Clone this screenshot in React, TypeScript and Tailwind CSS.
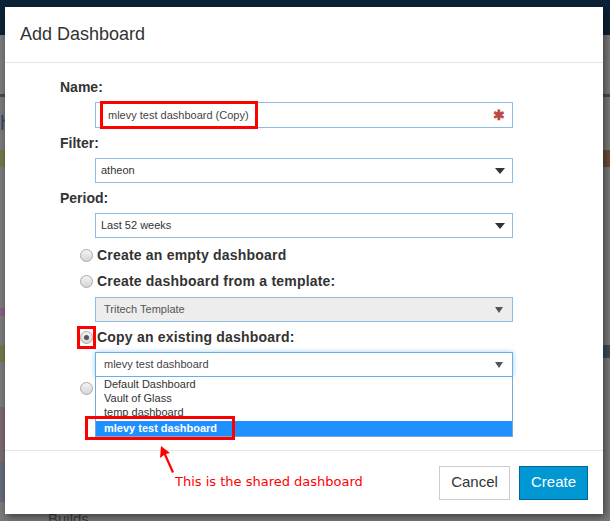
import React from 'react';

const font = { fontFamily: '"Liberation Sans", Arial, sans-serif' };

const Caret = ({ small }: { small?: boolean }) =>
  small ? (
    <svg width="8" height="6" viewBox="0 0 8 6" className="shrink-0">
      <path d="M0 0h8L4 6z" fill="#555" />
    </svg>
  ) : (
    <svg width="10" height="6" viewBox="0 0 10 6" className="shrink-0">
      <path d="M0 0h10L5 6z" fill="#333" />
    </svg>
  );

const Select = ({ value, disabled }: { value: string; disabled?: boolean }) => (
  <div
    className={`ml-[35px] flex h-[25px] w-[418px] items-center justify-between border border-[#8bbce6] text-[11px] ${
      disabled ? 'bg-[#ededed] pl-[8px] pr-[9px] text-[#555]' : 'bg-white pl-[5px] pr-[7px] text-[#333]'
    }`}
  >
    <span>{value}</span>
    <Caret small={disabled} />
  </div>
);

const Radio = ({ checked, marked }: { checked?: boolean; marked?: boolean }) => (
  <span className="relative inline-flex h-[13px] w-[13px] shrink-0 items-center justify-center rounded-full border border-[#a9a9a9] bg-gradient-to-b from-[#f4f4f4] to-[#d5d5d5]">
    {checked && <span className="h-[5px] w-[5px] rounded-full bg-[#555]" />}
    {marked && <span className="absolute left-[-4px] top-[-6px] h-[23px] w-[19px] border-[3px] border-[#ff0000]" />}
  </span>
);

const Label = ({ children, className = '' }: { children: React.ReactNode; className?: string }) => (
  <div className={`text-[14px] font-bold leading-[16px] text-[#333] ${className}`}>{children}</div>
);

const RadioRow = ({ children, checked, marked, className = '' }: any) => (
  <div className={`ml-[20px] flex items-center gap-[4px] text-[14px] font-bold leading-[16px] tracking-[0.2px] text-[#333] ${className}`}>
    <Radio checked={checked} marked={marked} />
    {children}
  </div>
);

export default function App() {
  return (
    <div className="relative h-[521px] w-[610px] overflow-hidden bg-[#7b7b7b]" style={font}>
      {/* page behind the overlay */}
      <div className="absolute left-0 top-0 h-[35px] w-full bg-[#0c2236]" />
      <div className="absolute left-0 top-[94px] h-[3px] w-full bg-[#4a4a4a]" />
      <div className="absolute left-0 top-[108px] text-[20px] text-[#2a4a6a]">h</div>
      <div className="absolute left-0 top-[150px] h-[17px] w-[6px] bg-[#6f7a4a]" />
      <div className="absolute right-0 top-[150px] h-[17px] w-[8px] bg-[#6d4c3a]" />
      <div className="absolute left-0 top-[308px] h-[8px] w-[6px] bg-[#8a5d86]" />
      <div className="absolute left-0 top-[345px] h-[17px] w-[6px] bg-[#6f7a4a]" />
      <div className="absolute right-0 top-[345px] h-[13px] w-[8px] bg-[#3c4d5c]" />
      <div className="absolute left-0 top-[407px] h-[55px] w-[6px] bg-[#7a6a6e]" />
      <div className="absolute left-0 top-[462px] h-[40px] w-[6px] bg-[#646c7a]" />
      <div className="absolute left-[48px] top-[508px] text-[15px] text-[#3e3e3e]">Builds</div>

      {/* modal */}
      <div className="absolute left-[5px] top-[7px] flex h-[507px] w-[598px] flex-col bg-white shadow-[2px_3px_8px_rgba(0,0,0,0.5)]">
        <div className="h-[56px] border-b border-[#e5e5e5] pl-[15px] pt-[15px] text-[18px] leading-[24px] text-[#333]">
          Add Dashboard
        </div>

        <div className="flex flex-1 flex-col pl-[55px] pt-[16px]">
          <Label>Name:</Label>
          <div className="relative ml-[35px] mt-[7px] flex h-[26px] w-[418px] items-center justify-between border border-[#8bbce6] bg-white pl-[12px] pr-[7px]">
            <span className="absolute left-[4px] top-[-2px] h-[28px] w-[158px] border-[3px] border-[#ff0000]" />
            <span className="text-[11px] text-[#444]">mlevy test dashboard (Copy)</span>
            <span className="text-[14px] font-bold leading-[14px] text-[#b94a48]">✱</span>
          </div>

          <Label className="mt-[7px]">Filter:</Label>
          <div className="mt-[7px]">
            <Select value="atheon" />
          </div>

          <Label className="mt-[7px]">Period:</Label>
          <div className="mt-[7px]">
            <Select value="Last 52 weeks" />
          </div>

          <RadioRow className="mt-[9px]">Create an empty dashboard</RadioRow>
          <RadioRow className="mt-[10px]">Create dashboard from a template:</RadioRow>
          <div className="mt-[8px]">
            <Select value="Tritech Template" disabled />
          </div>

          <RadioRow className="mt-[7px]" checked marked>
            Copy an existing dashboard:
          </RadioRow>

          {/* open select with its list */}
          <div className="relative ml-[35px] mt-[7px] w-[418px]">
            <div className="flex h-[25px] items-center justify-between border border-[#66afe9] bg-white pl-[8px] pr-[9px] text-[11px] text-[#444] shadow-[0_0_5px_rgba(102,175,233,0.6)]">
              <span>mlevy test dashboard</span>
              <Caret small />
            </div>
            <div className="absolute left-0 top-[25px] z-10 flex w-full flex-col border border-t-0 border-[#7aa7d9] bg-white text-[11px] leading-[14px] text-[#333]">
              <div className="pl-[8px]">Default Dashboard</div>
              <div className="pl-[8px]">Vault of Glass</div>
              <div className="pl-[8px]">temp dashboard</div>
              <div className="mt-[2px] h-[15px] bg-[#1e90ff] pl-[8px] font-bold leading-[15px] text-white">mlevy test dashboard</div>
              <span className="absolute left-[-11px] top-[39px] h-[24px] w-[150px] border-[3px] border-[#ff0000]" />
            </div>
          </div>

          <RadioRow className="mt-[5px]"> </RadioRow>
        </div>

        <div className="relative flex h-[64px] items-center justify-end gap-[9px] border-t border-[#e5e5e5] pr-[15px]">
          <svg width="20" height="30" viewBox="0 0 20 30" className="absolute left-[153px] top-[-7px]">
            <path d="M3 2 L2 14 L6 11 L14 29 L16 28 L8 10 L12 9 Z" fill="#ff0000" />
          </svg>
          <span
            className="absolute left-[170px] top-[23px] text-[13px] leading-[16px] text-[#ff0000]"
            style={{ fontFamily: '"DejaVu Sans", Verdana, sans-serif' }}
          >
            This is the shared dashboard
          </span>
          <button className="h-[34px] w-[71px] border border-[#ccc] bg-white text-[15px] text-[#333]">Cancel</button>
          <button className="h-[34px] w-[69px] border border-[#00679b] bg-[#0097d2] text-[15px] text-white">Create</button>
        </div>
      </div>
    </div>
  );
}
